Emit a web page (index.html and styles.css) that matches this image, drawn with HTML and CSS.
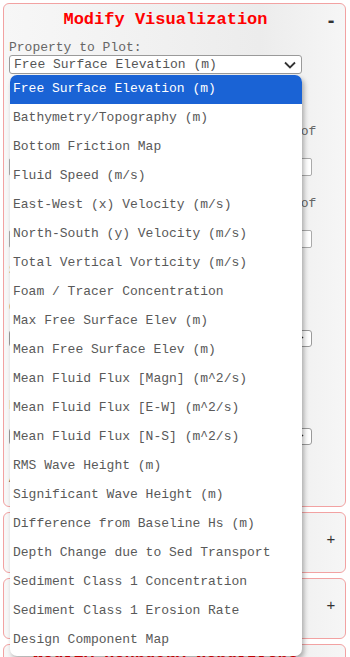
FILE: index.html
```html
<!DOCTYPE html>
<html lang="en">
<head>
  <meta charset="UTF-8">
  <title>Modify Visualization</title>
  <link rel="stylesheet" href="styles.css">
</head>
<body>
  <div class="page">

    <div class="panel panel-open">
      <div class="panel-head">
        <div class="title">Modify Visualization</div>
        <div class="toggle">-</div>
      </div>

      <div class="panel-body">
        <div class="label">Property to Plot:</div>
        <div class="select main-select">
          <span>Free Surface Elevation (m)</span>
          <svg class="chev" width="12" height="8" viewBox="0 0 12 8"><path d="M1 1.5 L6 6.5 L11 1.5" fill="none" stroke="#333" stroke-width="1.8"/></svg>
        </div>

        <!-- hidden behind the open list -->
        <div class="field f-min">
          <div class="label shifted">Colorbar minimum value (a percentage of max)</div>
          <div class="input"></div>
        </div>
        <div class="field f-max">
          <div class="label shifted">Colorbar maximum value (a percentage of max)</div>
          <div class="input"></div>
        </div>
        <div class="field f-check">
          <div class="label">Show land/water contour line</div>
        </div>
        <div class="field f-cmap">
          <div class="label">Colormap:</div>
          <div class="select sub-select">
            <span>Blue-White-Red</span>
            <svg class="chev" width="8" height="6" viewBox="0 0 8 6"><path d="M1 5 L6 1" fill="none" stroke="#333" stroke-width="1.6"/></svg>
          </div>
        </div>
        <div class="field f-quality">
          <div class="label">Render quality:</div>
          <div class="select sub-select">
            <span>Full resolution</span>
            <svg class="chev" width="8" height="6" viewBox="0 0 8 6"><path d="M1 5 L6 1" fill="none" stroke="#333" stroke-width="1.6"/></svg>
          </div>
        </div>
        <div class="field f-last">
          <div class="label">Apply changes</div>
        </div>
      </div>

      <ul class="dropdown">
        <li class="active">Free Surface Elevation (m)</li>
        <li>Bathymetry/Topography (m)</li>
        <li>Bottom Friction Map</li>
        <li>Fluid Speed (m/s)</li>
        <li>East-West (x) Velocity (m/s)</li>
        <li>North-South (y) Velocity (m/s)</li>
        <li>Total Vertical Vorticity (m/s)</li>
        <li>Foam / Tracer Concentration</li>
        <li>Max Free Surface Elev (m)</li>
        <li>Mean Free Surface Elev (m)</li>
        <li>Mean Fluid Flux [Magn] (m^2/s)</li>
        <li>Mean Fluid Flux [E-W] (m^2/s)</li>
        <li>Mean Fluid Flux [N-S] (m^2/s)</li>
        <li>RMS Wave Height (m)</li>
        <li>Significant Wave Height (m)</li>
        <li>Difference from Baseline Hs (m)</li>
        <li>Depth Change due to Sed Transport</li>
        <li>Sediment Class 1 Concentration</li>
        <li>Sediment Class 1 Erosion Rate</li>
        <li>Design Component Map</li>
      </ul>
    </div>

    <div class="panel">
      <div class="panel-head closed">
        <div class="title">Modify Simulation<br>Parameters</div>
        <div class="toggle plus">+</div>
      </div>
    </div>

    <div class="panel">
      <div class="panel-head closed">
        <div class="title">Modify Wave<br>Parameters</div>
        <div class="toggle plus">+</div>
      </div>
    </div>

    <div class="panel">
      <div class="panel-head">
        <div class="title">Modify Boundary Conditions</div>
        <div class="toggle plus">+</div>
      </div>
    </div>

  </div>
</body>
</html>
```

FILE: styles.css
```css
body {
  margin: 0;
  font-family: "Liberation Mono", "DejaVu Sans Mono", monospace;
  font-size: 13px;
  color: #555;
  background: #ffffff;
}

.page {
  padding: 3px 4px 0 3px;
  display: flex;
  flex-direction: column;
  gap: 5px;
}

.panel {
  border: 1px solid #f2a2a2;
  border-radius: 6px;
  background: linear-gradient(to right, #f7f7f7, #ececec 75%, #f6f6f6);
}

.panel-open {
  position: relative;
}

.panel-head {
  display: flex;
  align-items: center;
  padding: 5px 5px 0 5px;
}

.panel-head.closed {
  padding: 4px 5px 11px 5px;
}

.title {
  flex: 1;
  text-align: center;
  color: #ff0000;
  font-weight: bold;
  font-size: 17px;
  line-height: 22px;
}

.toggle {
  width: 18px;
  text-align: center;
  color: #333;
  font-family: "Liberation Sans", sans-serif;
  font-size: 20px;
  font-weight: bold;
  line-height: 18px;
}

.toggle.plus {
  font-size: 15px;
  font-weight: normal;
  line-height: 22px;
}

.panel-body {
  padding: 9px 8px 8px 5px;
}

.label {
  color: #666;
  line-height: 15px;
}

.label.shifted {
  padding-left: 3px;
}

.select {
  display: flex;
  align-items: center;
  justify-content: space-between;
  background: #fff;
  border: 1px solid #9a9a9a;
  border-radius: 3px;
  box-sizing: border-box;
}

.main-select {
  width: 293px;
  height: 19px;
  padding: 0 5px 0 4px;
  color: #555;
}

.sub-select {
  width: 303px;
  height: 17px;
  padding: 0 6px 0 4px;
  margin-top: 15px;
}

.input {
  width: 303px;
  height: 18px;
  margin-top: 4px;
  background: #fff;
  border: 1px solid #aaa;
  border-radius: 2px;
  box-sizing: border-box;
}

.f-min {
  margin-top: 50px;
}

.f-max {
  margin-top: 20px;
}

.f-check {
  margin-top: 15px;
}

.f-cmap {
  margin-top: 22px;
}

.f-quality {
  margin-top: 51px;
}

.f-last {
  margin-top: 26px;
  padding-bottom: 12px;
}

.dropdown {
  position: absolute;
  z-index: 10;
  left: 6px;
  top: 71px;
  width: 292px;
  margin: 0;
  padding: 0 0 1px 0;
  list-style: none;
  background: #ffffff;
  border-radius: 7px;
  box-shadow: 2px 3px 5px rgba(0, 0, 0, 0.3);
  overflow: hidden;
}

.dropdown li {
  height: 29px;
  line-height: 28px;
  padding-left: 3px;
  color: #595959;
  white-space: nowrap;
}

.dropdown li.active {
  background: #1a63d5;
  color: #ffffff;
  line-height: 27px;
}
```
